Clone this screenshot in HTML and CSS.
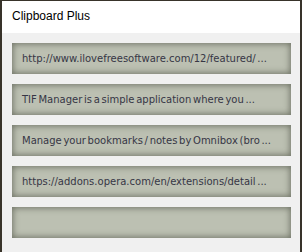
FILE: index.html
```html
<!DOCTYPE html>
<html lang="en">
  <head>
    <meta charset="UTF-8" />
    <title>Clipboard Plus</title>
    <link rel="stylesheet" href="styles.css">
  </head>
  <body>
    <div class="popup">
      <div class="header">Clipboard Plus</div>
      <div class="list">
        <div class="clip">http://www.ilovefreesoftware.com/12/featured/ ...</div>
        <div class="clip">TIF Manager is a simple application where you ...</div>
        <div class="clip">Manage your bookmarks / notes by Omnibox (bro ...</div>
        <div class="clip">https://addons.opera.com/en/extensions/detail ...</div>
        <div class="clip"></div>
      </div>
    </div>
  </body>
</html>
```

FILE: styles.css
```css
html, body {
  margin: 0;
  height: 100%;
}
body {
  background: #f0f0f0;
  font-family: "Liberation Sans", sans-serif;
}
.popup {
  height: 100%;
  box-sizing: border-box;
  border-left: 2px solid #38332a;
  border-right: 2px solid #38332a;
  border-top: 1px solid #38332a;
  background: #f0f0f0;
}
.header {
  height: 32px;
  background: #fff;
  padding-left: 10px;
  font-size: 12px;
  line-height: 30px;
  color: #000;
}
.list {
  display: flex;
  flex-direction: column;
  gap: 10px;
  padding: 10px 9px 0 10px;
}
.clip {
  height: 31px;
  background: #bcc0b2;
  box-shadow: inset 0 0 6px 1px rgba(60, 64, 52, 0.6);
  padding-left: 10px;
  font-family: "DejaVu Sans", sans-serif;
  font-size: 10px;
  word-spacing: -1.5px;
  line-height: 31px;
  color: #363645;
  white-space: nowrap;
  overflow: hidden;
}
```
